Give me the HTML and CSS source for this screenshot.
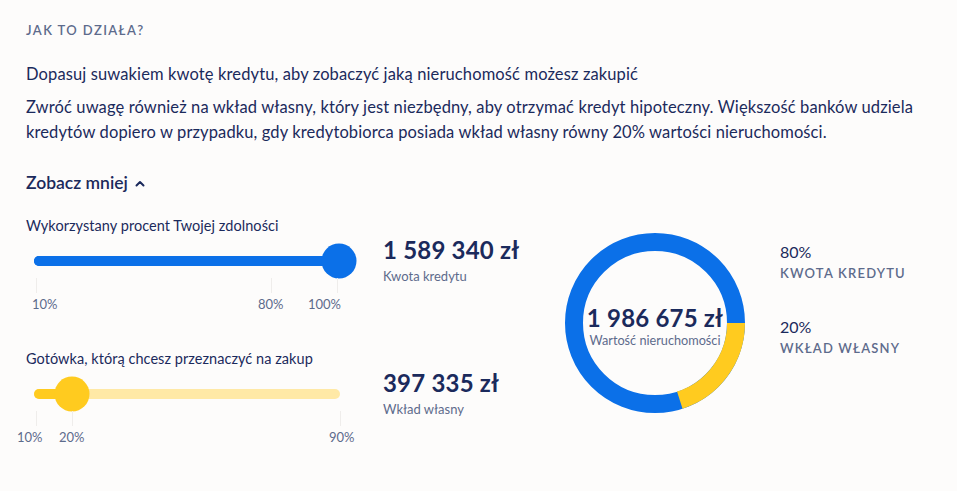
FILE: index.html
```html
<!DOCTYPE html>
<html lang="pl">
<head>
<meta charset="utf-8">
<title>Jak to działa?</title>
<link rel="stylesheet" href="styles.css">
</head>
<body>
<section class="info">
  <h2 class="eyebrow">JAK TO DZIAŁA?</h2>
  <p class="lead">Dopasuj suwakiem kwotę kredytu, aby zobaczyć jaką nieruchomość możesz zakupić</p>
  <p class="lead para">Zwróć uwagę również na wkład własny, który jest niezbędny, aby otrzymać kredyt hipoteczny. Większość banków udziela kredytów dopiero w przypadku, gdy kredytobiorca posiada wkład własny równy 20% wartości nieruchomości.</p>
  <button class="toggle" type="button">Zobacz mniej
    <svg class="chev" width="10" height="7" viewBox="0 0 10 7"><path d="M1.5 5.5 L5 2 L8.5 5.5" fill="none" stroke="#1b2a5c" stroke-width="2" stroke-linecap="round" stroke-linejoin="round"/></svg>
  </button>

  <div class="calc">
    <div class="inputs">
      <div class="slider">
        <div class="slider-label">Wykorzystany procent Twojej zdolności</div>
        <div class="track-wrap">
          <div class="track blue-track">
            <div class="fill blue-fill" style="width:100%"></div>
            <div class="thumb blue-thumb" style="left:99.7%"></div>
          </div>
        </div>
        <div class="scale">
          <span class="tick" style="left:2px"></span>
          <span class="tick" style="left:237px"></span>
          <span class="tick" style="left:303px"></span>
          <span class="mark" style="left:-2px">10%</span>
          <span class="mark" style="left:224px">80%</span>
          <span class="mark" style="left:274px">100%</span>
        </div>
      </div>
      <div class="amount">
        <div class="amount-value">1 589 340 zł</div>
        <div class="amount-label">Kwota kredytu</div>
      </div>

      <div class="slider">
        <div class="slider-label">Gotówka, którą chcesz przeznaczyć na zakup</div>
        <div class="track-wrap">
          <div class="track yellow-track">
            <div class="fill yellow-fill" style="width:12.5%"></div>
            <div class="thumb yellow-thumb" style="left:12.5%"></div>
          </div>
        </div>
        <div class="scale">
          <span class="tick" style="left:2px"></span>
          <span class="tick" style="left:38px"></span>
          <span class="tick" style="left:306px"></span>
          <span class="mark" style="left:-17px">10%</span>
          <span class="mark" style="left:25px">20%</span>
          <span class="mark" style="left:295px">90%</span>
        </div>
      </div>
      <div class="amount">
        <div class="amount-value">397 335 zł</div>
        <div class="amount-label">Wkład własny</div>
      </div>
    </div>

    <div class="donut">
      <svg width="180" height="180" viewBox="0 0 180 180">
        <circle cx="90" cy="90" r="81" fill="none" stroke="#0b70e8" stroke-width="18"/>
        <circle cx="90" cy="90" r="81" fill="none" stroke="#ffcb1f" stroke-width="18" stroke-dasharray="101.79 508.94"/>
      </svg>
      <div class="donut-center">
        <div class="donut-value">1 986 675 zł</div>
        <div class="donut-label">Wartość nieruchomości</div>
      </div>
    </div>

    <ul class="legend">
      <li class="legend-item">
        <span class="legend-pct">80%</span>
        <span class="legend-name">KWOTA KREDYTU</span>
      </li>
      <li class="legend-item">
        <span class="legend-pct">20%</span>
        <span class="legend-name">WKŁAD WŁASNY</span>
      </li>
    </ul>
  </div>
</section>
</body>
</html>
```

FILE: styles.css
```css
* { box-sizing: border-box; }
html, body {
  margin: 0;
  padding: 0;
  background: #fdfcfb;
}
body {
  font-family: Lato, "Open Sans", "Liberation Sans", sans-serif;
  color: #1b2a5c;
}
.info {
  padding: 20px 26px 0 26px;
}
.eyebrow {
  margin: 0;
  font-size: 13px;
  line-height: 20px;
  font-weight: 600;
  letter-spacing: 1.4px;
  color: #5d6b8c;
}
.lead {
  margin: 22px 0 0 0;
  font-size: 16.5px;
  line-height: 25px;
  letter-spacing: 0.12px;
  color: #1b2a5c;
}
.lead.para {
  margin-top: 8px;
}
.toggle {
  display: flex;
  align-items: center;
  gap: 7px;
  margin: 25px 0 0 0;
  padding: 0;
  border: 0;
  background: none;
  font-family: inherit;
  font-size: 17.5px;
  line-height: 25px;
  font-weight: 600;
  color: #1b2a5c;
}
.chev { display: block; margin-top: 1px; }

.calc {
  display: flex;
  align-items: flex-start;
  margin-top: 21px;
}
.inputs {
  display: grid;
  grid-template-columns: 329px 182px;
  column-gap: 28px;
  row-gap: 36px;
}
.slider-label {
  font-size: 14.5px;
  line-height: 20px;
  letter-spacing: 0.05px;
  color: #1b2a5c;
}
.track-wrap {
  height: 35px;
  margin-top: 7px;
  padding: 0 15px 0 8px;
  display: flex;
  align-items: center;
}
.track {
  position: relative;
  flex: 1;
  height: 10px;
  border-radius: 5px;
}
.blue-track { background: #0b70e8; }
.yellow-track { background: #ffe9a6; }
.fill {
  height: 100%;
  border-radius: 5px;
}
.blue-fill { background: #0b70e8; }
.yellow-fill { background: #ffcb1f; }
.thumb {
  position: absolute;
  top: 50%;
  width: 35px;
  height: 35px;
  border-radius: 50%;
  transform: translate(-50%, -50%);
}
.blue-thumb { background: #0b70e8; }
.yellow-thumb { background: #ffcb1f; }

.scale {
  position: relative;
  height: 35px;
  margin-left: 8px;
}
.tick {
  position: absolute;
  top: 0;
  width: 1px;
  height: 15px;
  background: #efedeb;
}
.mark {
  position: absolute;
  top: 18px;
  font-size: 13px;
  line-height: 16px;
  color: #5d6b8c;
}

.amount {
  padding-top: 20px;
}
.amount-value {
  font-size: 24px;
  line-height: 28px;
  font-weight: 700;
  letter-spacing: 0.2px;
  color: #1b2a5c;
}
.amount-label {
  margin-top: 3px;
  font-size: 13px;
  line-height: 18px;
  color: #5d6b8c;
}

.donut {
  position: relative;
  width: 180px;
  height: 180px;
  margin-top: 17px;
}
.donut svg { display: block; }
.donut-center {
  position: absolute;
  inset: 0;
  display: flex;
  flex-direction: column;
  align-items: center;
  justify-content: center;
  padding-top: 6px;
}
.donut-value {
  font-size: 24px;
  line-height: 28px;
  font-weight: 700;
  letter-spacing: 0.2px;
  color: #1b2a5c;
}
.donut-label {
  font-size: 12.7px;
  line-height: 16px;
  color: #5d6b8c;
}

.legend {
  list-style: none;
  margin: 26px 0 0 35px;
  padding: 0;
  display: flex;
  flex-direction: column;
  gap: 33px;
}
.legend-item {
  display: flex;
  flex-direction: column;
  gap: 1px;
}
.legend-pct {
  font-size: 16px;
  line-height: 20px;
  color: #1b2a5c;
}
.legend-name {
  font-size: 13px;
  line-height: 21px;
  font-weight: 600;
  letter-spacing: 1.2px;
  color: #5d6b8c;
}
```
